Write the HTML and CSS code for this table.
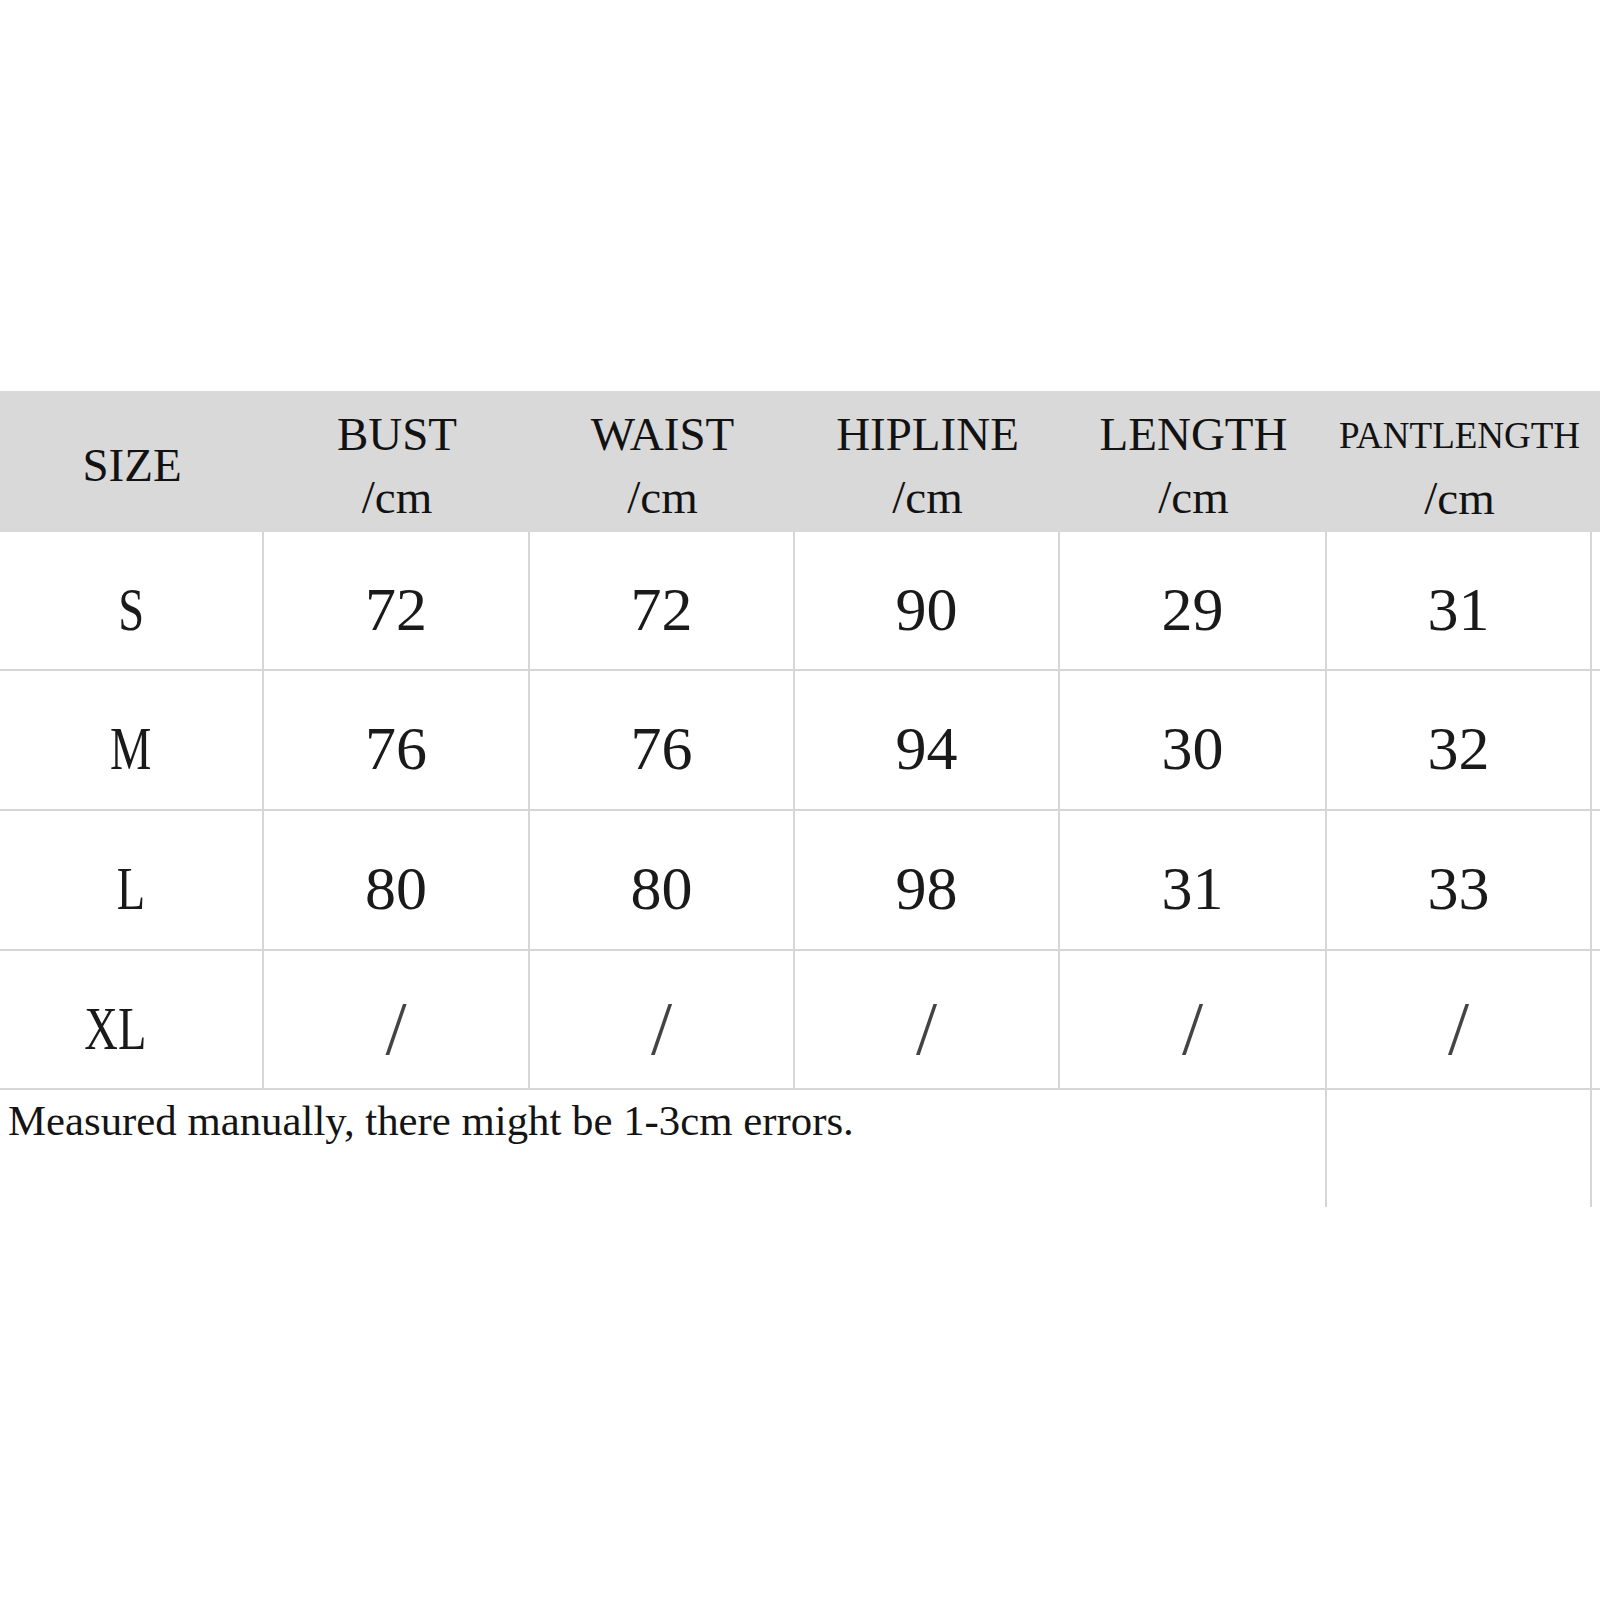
FILE: index.html
```html
<!DOCTYPE html>
<html>
<head>
<meta charset="utf-8">
<link rel="stylesheet" href="styles.css">
</head>
<body>
<div class="page">
  <div class="sheet">
    <div class="hd"><span>SIZE</span></div>
    <div class="hd"><span>BUST<br>/cm</span></div>
    <div class="hd"><span>WAIST<br>/cm</span></div>
    <div class="hd"><span>HIPLINE<br>/cm</span></div>
    <div class="hd"><span>LENGTH<br>/cm</span></div>
    <div class="hd"><span><span class="small">PANTLENGTH</span><br>/cm</span></div>
    <div class="hd hd-end"></div>

    <div class="cell"><span class="lbl">S</span></div>
    <div class="cell">72</div>
    <div class="cell">72</div>
    <div class="cell">90</div>
    <div class="cell">29</div>
    <div class="cell">31</div>
    <div class="cell cell-end"></div>

    <div class="cell"><span class="lbl">M</span></div>
    <div class="cell">76</div>
    <div class="cell">76</div>
    <div class="cell">94</div>
    <div class="cell">30</div>
    <div class="cell">32</div>
    <div class="cell cell-end"></div>

    <div class="cell"><span class="lbl">L</span></div>
    <div class="cell">80</div>
    <div class="cell">80</div>
    <div class="cell">98</div>
    <div class="cell">31</div>
    <div class="cell">33</div>
    <div class="cell cell-end"></div>

    <div class="cell cell-xl"><span class="lbl">XL</span></div>
    <div class="cell slash">/</div>
    <div class="cell slash">/</div>
    <div class="cell slash">/</div>
    <div class="cell slash">/</div>
    <div class="cell slash">/</div>
    <div class="cell cell-end"></div>

    <div class="note">Measured manually, there might be 1-3cm errors.</div>
    <div class="foot"></div>
    <div class="foot foot-end"></div>
  </div>
</div>
</body>
</html>
```
FILE: styles.css
```css
html, body {
  margin: 0;
  padding: 0;
  background: #ffffff;
}

.page {
  width: 1600px;
  height: 1600px;
  padding-top: 391px;
  box-sizing: border-box;
  overflow: hidden;
  font-family: "Liberation Serif", "Times New Roman", serif;
  color: #121212;
}

.sheet {
  display: grid;
  grid-template-columns: 264px 266px 265px 265px 267px 265px 8px;
  grid-template-rows: 141px 139px 140px 140px 139px 117px;
}

.hd {
  background: #d9d9d9;
  display: flex;
  align-items: center;
  justify-content: center;
  text-align: center;
  padding-top: 8px;
  box-sizing: border-box;
  font-size: 47px;
  line-height: 63px;
}

.hd .small {
  font-size: 37px;
}

.cell {
  display: flex;
  align-items: center;
  justify-content: center;
  box-sizing: border-box;
  padding-top: 16px;
  border-right: 2px solid #d6d6d6;
  border-bottom: 2px solid #d6d6d6;
  font-size: 62px;
  line-height: 62px;
  color: #1a1a1a;
}

.cell-end {
  border-right: none;
}

.lbl {
  display: inline-block;
  transform: scaleX(0.75);
}

.cell-xl {
  padding-right: 32px;
}

.slash {
  font-size: 76px;
  line-height: 76px;
  color: #444444;
}

.note {
  grid-column: 1 / span 5;
  border-right: 2px solid #d6d6d6;
  padding: 3px 0 0 8px;
  font-size: 42.8px;
  line-height: 56px;
  color: #141414;
  white-space: nowrap;
}

.foot {
  border-right: 2px solid #d6d6d6;
}

.foot-end {
  border-right: none;
}
```
